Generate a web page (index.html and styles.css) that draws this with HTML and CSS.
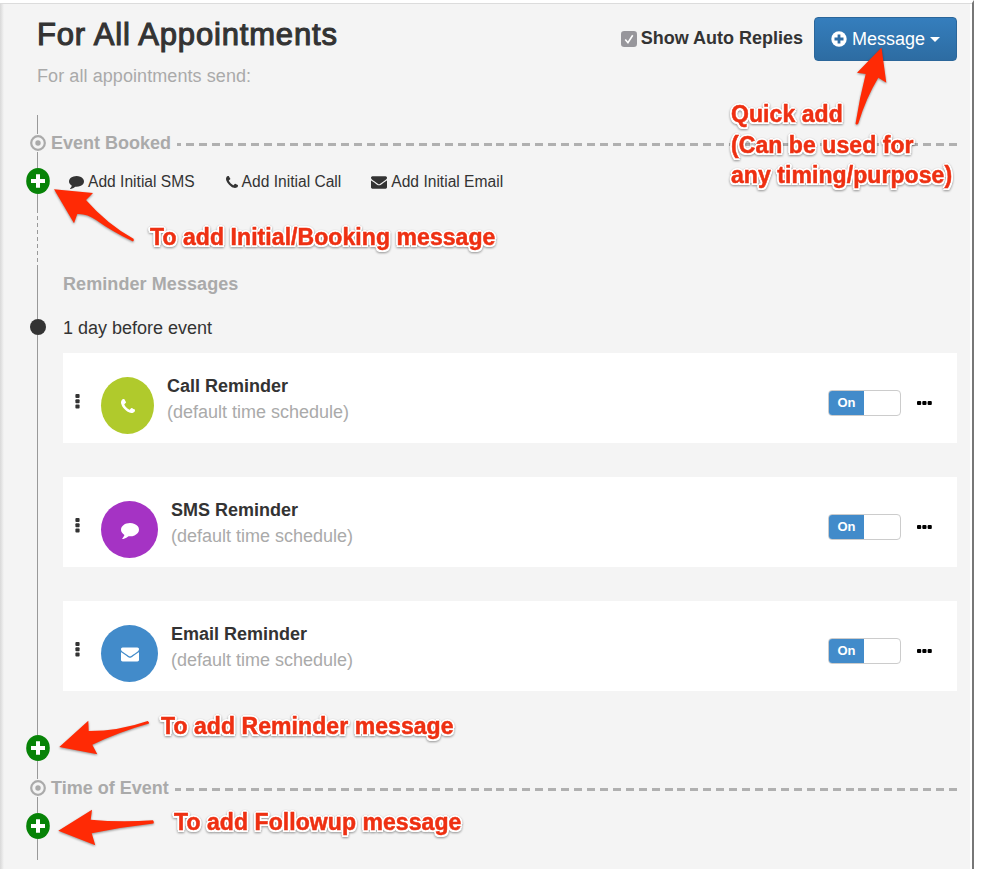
FILE: index.html
```html
<!DOCTYPE html>
<html lang="en">
<head>
<meta charset="utf-8">
<title>For All Appointments</title>
<link rel="stylesheet" href="styles.css">
</head>
<body>
<svg class="sprite" aria-hidden="true">
  <symbol id="phone" viewBox="0 0 1408 1408"><path d="M1408 1112q0 27-10 70.500t-21 68.500q-21 50-122 106-94 51-186 51-27 0-53-3.500t-57.500-12.500-47-14.500-55.500-20.500-49-18q-98-35-175-83-127-79-264-216t-216-264q-48-77-83-175-3-9-18-49t-20.500-55.500-14.500-47-12.500-57.500-3.500-53q0-92 51-186 56-101 106-122 25-11 68.500-21t70.500-10q14 0 21 3 18 6 53 76 11 19 30 54t35 63.500 31 53.500q3 4 17.500 25t21.500 35.500 7 28.500q0 20-28.500 50t-62 55-62 53-28.500 46q0 9 5 22.500t8.500 20.500 14 24 11.500 19q76 137 174 235t235 174q2 1 19 11.500t24 14 20.500 8.500 22.500 5q18 0 46-28.500t53-62 55-62 50-28.500q14 0 28.500 7t35.500 21.500 25 17.500q25 15 53.500 31t63.500 35 54 30q70 35 76 53 3 7 3 21z"/></symbol>
  <symbol id="comment" viewBox="0 256 1792 1536" preserveAspectRatio="none"><path d="M1792 896q0 174-120 321.500t-326 233-450 85.500q-70 0-145-8-198 175-460 242-49 14-114 22-17 2-30.500-9t-17.500-29v-1q-3-4-.5-12t2-10 4.500-9.500l6-9 7-8.500 8-9q7-8 31-34.500t34.500-38 31-39.500 32.500-51 27-59 26-76q-157-89-247.500-220t-90.500-281q0-130 71-248.500t191-204.500 286-136.500 348-50.500q244 0 450 85.500t326 233 120 321.500z"/></symbol>
  <symbol id="envelope" viewBox="0 256 1792 1408"><path d="M1792 710v794q0 66-47 113t-113 47h-1472q-66 0-113-47t-47-113v-794q44 49 101 87 362 246 497 345 57 42 92.500 65.500t94.500 48 110 24.500h2q51 0 110-24.500t94.500-48 92.500-65.500q170-123 498-345 57-39 100-87zm0-294q0 79-49 151t-122 123q-376 261-468 325-10 7-42.500 31t-54 38.500-52 32.500-57.500 27-50 9h-2q-23 0-50-9t-57.500-27-52-32.500-54-38.500-42.500-31q-91-64-262-182.500t-205-142.500q-62-42-117-115.500t-55-136.500q0-78 41.500-130t118.500-52h1472q65 0 112.500 47t47.500 113z"/></symbol>
  <symbol id="target" viewBox="0 0 16 16"><circle cx="8" cy="8" r="6.800" fill="none" stroke="currentColor" stroke-width="2.200"/><circle cx="8" cy="8" r="2.700"/></symbol>
  <symbol id="add" viewBox="0 0 24 26"><ellipse cx="12" cy="13" rx="11.800" ry="13" fill="#078307"/><path d="M12 6.200v13.600M5 13h14" stroke="#fff" stroke-width="4"/></symbol>
  <symbol id="vdots" viewBox="0 0 5 15"><rect x=".4" width="4.200" height="4" rx="1"/><rect x=".4" y="5.300" width="4.200" height="4" rx="1"/><rect x=".4" y="10.600" width="4.200" height="4" rx="1"/></symbol>
  <symbol id="hdots" viewBox="0 0 15 4"><rect width="4.200" height="4" rx="1"/><rect x="5.300" width="4.200" height="4" rx="1"/><rect x="10.600" width="4.200" height="4" rx="1"/></symbol>
</svg>

<main class="panel">
  <header class="header">
    <div class="heading">
      <h1 class="title">For All Appointments</h1>
      <p class="subtitle">For all appointments send:</p>
    </div>
    <div class="controls">
      <label class="replies">
        <svg class="check" viewBox="0 0 15 15"><rect width="15" height="15" rx="3" fill="#97969b"/><path d="M4 8l2.500 3L11 4" fill="none" stroke="#fff" stroke-width="1.500"/></svg>
        <span>Show Auto Replies</span>
      </label>
      <button class="message-btn">
        <svg class="plus" viewBox="0 0 16 16"><circle cx="8" cy="8" r="7.700" fill="#fff"/><path d="M8 3.500v9M3.500 8h9" stroke="#2d6ca5" stroke-width="2.800"/></svg>
        <span>Message</span>
        <i class="caret"></i>
      </button>
    </div>
  </header>

  <div class="timeline">
    <div class="rail">
      <i class="line line-start"></i>
      <svg class="target"><use href="#target"/></svg>
      <i class="line line-short"></i>
      <svg class="add"><use href="#add"/></svg>
      <i class="line line-booked"></i>
      <i class="line-dashed"></i>
      <i class="line line-reminder"></i>
      <i class="dot"></i>
      <i class="line line-grow"></i>
      <svg class="add"><use href="#add"/></svg>
      <i class="line line-event"></i>
      <svg class="target"><use href="#target"/></svg>
      <i class="line line-short"></i>
      <svg class="add"><use href="#add"/></svg>
      <i class="line line-end"></i>
    </div>
    <div class="stages">
      <div class="stage"><h2>Event Booked</h2><i class="dashes"></i></div>
      <nav class="initial">
        <a class="action"><svg class="ic ic-comment"><use href="#comment"/></svg>Add Initial SMS</a>
        <a class="action"><svg class="ic ic-phone"><use href="#phone"/></svg>Add Initial Call</a>
        <a class="action"><svg class="ic ic-envelope"><use href="#envelope"/></svg>Add Initial Email</a>
      </nav>
      <section class="reminders">
        <h2>Reminder Messages</h2>
        <p class="when">1 day before event</p>
        <div class="cards">
          <article class="card">
            <svg class="vdots"><use href="#vdots"/></svg>
            <div class="badge badge-call"><svg class="b-phone"><use href="#phone"/></svg></div>
            <div class="info"><h3>Call Reminder</h3><p>(default time schedule)</p></div>
            <div class="switch"><span>On</span></div>
            <svg class="hdots"><use href="#hdots"/></svg>
          </article>
          <article class="card">
            <svg class="vdots"><use href="#vdots"/></svg>
            <div class="badge badge-sms"><svg class="b-comment"><use href="#comment"/></svg></div>
            <div class="info"><h3>SMS Reminder</h3><p>(default time schedule)</p></div>
            <div class="switch"><span>On</span></div>
            <svg class="hdots"><use href="#hdots"/></svg>
          </article>
          <article class="card">
            <svg class="vdots"><use href="#vdots"/></svg>
            <div class="badge badge-email"><svg class="b-envelope"><use href="#envelope"/></svg></div>
            <div class="info"><h3>Email Reminder</h3><p>(default time schedule)</p></div>
            <div class="switch"><span>On</span></div>
            <svg class="hdots"><use href="#hdots"/></svg>
          </article>
        </div>
      </section>
      <div class="stage stage-event"><h2>Time of Event</h2><i class="dashes"></i></div>
    </div>
  </div>
</main>

<svg class="arrows" viewBox="0 0 1000 869" aria-hidden="true">
  <path d="M881.500 47.500L886.300 82.800L878.300 77.700Q866 98 858.300 123.500Q857 125.500 855.500 123.700Q859.500 98 865.700 74L857 72.700Z"/>
  <path d="M54 189.200L93 193L86 200Q107 224 133.500 238.800Q134.500 240.500 133 241.500Q112 231.500 96 220Q87 213.500 77.300 214L74 223.300Z"/>
  <path d="M59.300 747L88.300 720.700L88.700 731Q119 731 147.700 721Q149.500 722 149 723.500Q119 732 92.300 744.700L97.300 754.200Z"/>
  <path d="M58.300 830.700L92 809.700L90.700 819.700Q121 822.500 153 820.200Q154.500 822 153.500 823.500Q122 827 91.700 833.300L95.300 845.200Z"/>
</svg>
<p class="note note-quick">Quick add<br>(Can be used for<br>any timing/purpose)</p>
<p class="note note-initial">To add Initial/Booking message</p>
<p class="note note-reminder">To add Reminder message</p>
<p class="note note-followup">To add Followup message</p>
</body>
</html>
```

FILE: styles.css
```css
* { box-sizing: border-box; }

body {
  position: relative;
  margin: 0;
  height: 869px;
  overflow: hidden;
  background: #fff;
  color: #333;
  font: 18px/26px "Liberation Sans", Arial, sans-serif;
}

h1, h2, h3, p { margin: 0; font-size: 18px; }
svg { display: block; flex: none; fill: currentColor; }
.sprite { position: absolute; width: 0; height: 0; }

.panel {
  width: 974px;
  height: 869px;
  border-top: 3px solid #fff;
  border-right: 2px solid #777;
  padding: 0 15px 0 25px;
  background:
    linear-gradient(#dcdcdc, #dcdcdc) 0 0 / 100% 1px no-repeat,
    linear-gradient(#fff, #fff) 100% 0 / 2px 100% no-repeat,
    linear-gradient(to right, #d8d8d8, #f4f4f4 4px);
}

/* Header */
.header {
  display: flex;
  justify-content: space-between;
  height: 112px;
  padding: 14px 0 0 12px;
}
.title {
  font-size: 31px;
  font-weight: 400;
  line-height: 36px;
  letter-spacing: .82px;
  -webkit-text-stroke: 1.1px #333;
}
.subtitle { margin-top: 10px; color: #aaa; letter-spacing: .08px; }
.controls { display: flex; align-items: flex-start; gap: 11px; }
.replies {
  display: flex;
  align-items: center;
  gap: 4px;
  margin-top: 8px;
  font-weight: 700;
}
.check { width: 16px; height: 16px; margin-top: 2px; }
.message-btn {
  display: flex;
  align-items: center;
  gap: 5px;
  width: 143px;
  height: 44px;
  padding: 0 16px;
  border: 1px solid #2b669a;
  border-radius: 4px;
  background: linear-gradient(#357ebd, #2d6ca2);
  color: #fff;
  font: inherit;
}
.plus { width: 16px; height: 16px; }
.caret {
  margin-top: 1px;
  border: 5px solid transparent;
  border-top-color: #fff;
  border-bottom: 0;
}

/* Timeline rail */
.timeline { display: grid; grid-template-columns: 26px 1fr; height: 745px; }
.rail { display: flex; flex-direction: column; align-items: center; }
.line { width: 1px; background: #999; margin-right: 1px; }
.line-start { height: 19px; }
.line-short { height: 16px; }
.line-booked { height: 19px; }
.line-dashed {
  width: 1px;
  height: 54px;
  margin-right: 1px;
  background: repeating-linear-gradient(transparent 0 3px, #999 3px 7px);
}
.line-reminder { height: 52px; }
.line-grow { flex: 1; }
.line-event { height: 18px; }
.line-end { height: 21px; }
.target { width: 16px; height: 16px; margin: 1px 0; color: #aaa; overflow: visible; }
.add { width: 24px; height: 26px; }
.dot { width: 16px; height: 16px; border-radius: 50%; background: #333; }

/* Stages */
.stages { padding-top: 15px; }
.stage { display: flex; align-items: center; gap: 6px; color: #aaa; }
.dashes {
  flex: 1;
  height: 3px;
  margin-top: 3px;
  background: repeating-linear-gradient(to left, #b0b0b0 0 8px, transparent 8px 12.93px);
}
.initial { display: flex; gap: 30px; margin-top: 13px; padding-left: 18px; }
.action { display: flex; align-items: center; gap: 4px; font-size: 15.6px; }
.ic-comment { width: 15px; height: 13px; margin-top: 1px; }
.ic-phone { width: 12px; height: 12px; margin-left: 1px; }
.ic-envelope { width: 16px; height: 13px; }
.reminders { margin-top: 76px; padding-left: 12px; }
.reminders h2 { color: #aaa; letter-spacing: .08px; }
.when { margin-top: 18px; }
.cards { display: grid; gap: 34px; margin-top: 12px; }
.card { display: flex; align-items: center; height: 90px; padding: 0 25px 0 12px; background: #fff; }
.vdots { width: 5px; height: 15px; margin: 7px 21px 0 0; }
.badge {
  display: flex;
  align-items: center;
  justify-content: center;
  width: 57px;
  height: 57px;
  margin: 15px 13px 0 0;
  border-radius: 50%;
  color: #fff;
}
.badge-call { width: 53px; background: #b0ca2c; }
.badge-sms { background: #a533c4; }
.badge-email { background: #428bca; }
.b-phone { width: 14px; height: 14px; }
.b-comment { width: 18px; height: 16px; margin-top: 3px; }
.b-envelope { width: 18px; height: 15px; margin-top: 1px; }
.info { flex: 1; padding-top: 1px; }
.info p { color: #aaa; }
.switch {
  width: 73px;
  height: 26px;
  margin: 10px 16px 0 0;
  border: 1px solid #ccc;
  border-radius: 4px;
  overflow: hidden;
}
.switch span {
  display: block;
  width: 35px;
  background: #428bca;
  color: #fff;
  font-size: 13px;
  font-weight: 700;
  line-height: 24px;
  text-align: center;
}
.hdots { width: 15px; height: 4px; margin-top: 10px; color: #000; }
.stage-event { margin-top: 84px; }

/* Annotations laid over the page */
.arrows {
  position: absolute;
  inset: 0;
  width: 1000px;
  height: 869px;
  fill: #ff2a05;
  filter: drop-shadow(0 1px 1px rgba(0, 0, 0, .4));
}
.note {
  position: absolute;
  color: #ee3012;
  font-size: 23px;
  font-weight: 700;
  line-height: 30.5px;
  letter-spacing: .07px;
  white-space: nowrap;
  -webkit-text-stroke: .5px #ee3012;
  text-shadow:
    -2px 0 #fff, 2px 0 #fff, 0 -2px #fff, 0 2px #fff,
    -1.5px -1.5px #fff, 1.5px -1.5px #fff, -1.5px 1.5px #fff, 1.5px 1.5px #fff;
  filter: drop-shadow(0 1px 1px rgba(0, 0, 0, .4));
}
.note-quick { left: 731px; top: 99px; }
.note-initial { left: 150px; top: 222px; }
.note-reminder { left: 161px; top: 711px; }
.note-followup { left: 174px; top: 807px; }
```
